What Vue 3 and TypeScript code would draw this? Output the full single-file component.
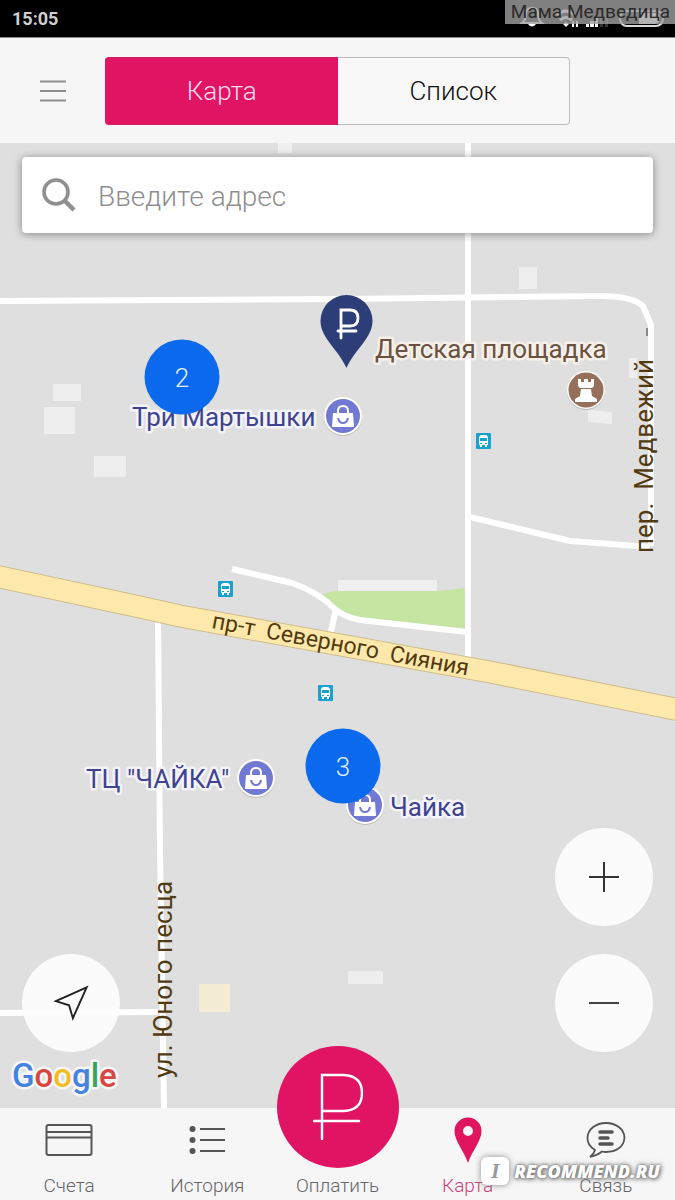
<script setup lang="ts">
import { computed, ref } from 'vue'

interface Place {
  name: string
  textX: number
  textY: number
  iconX: number
  iconY: number
}

interface Cluster {
  count: number
  x: number
  y: number
}

const MAP_WIDTH = 675
const MAP_HEIGHT = 965

const view = ref<'map' | 'list'>('map')
const address = ref('')

const shops: Place[] = [
  { name: 'Три Мартышки', textX: 132, textY: 426, iconX: 343, iconY: 416 },
  { name: 'ТЦ "ЧАЙКА"', textX: 86, textY: 788, iconX: 256, iconY: 778 },
  { name: 'Чайка', textX: 390, textY: 816, iconX: 365, iconY: 805 },
]

const avenue = ['пр-т', 'Северного', 'Сияния'].join('\u00a0\u00a0')
const lane = ['пер.', 'Медвежий'].join('\u00a0\u00a0')

const busStops = [
  { x: 484, y: 441 },
  { x: 226, y: 589 },
  { x: 326, y: 693 },
]

const clusters: Cluster[] = [
  { count: 2, x: 182, y: 234 },
  { count: 3, x: 343, y: 623 },
]

const placedClusters = computed(() =>
  clusters.map((c) => ({
    count: c.count,
    style: {
      left: `${(c.x / MAP_WIDTH) * 100}%`,
      top: `${(c.y / MAP_HEIGHT) * 100}%`,
    },
  })),
)
</script>

<template>
  <div class="screen">
    <div class="status">
      <time class="clock">15:05</time>
      <svg class="status-icons" width="150" height="30" viewBox="0 0 150 30" aria-hidden="true">
        <path d="M7 23q4-3 4-9 0-6 6-6t6 6q0 6 4 9z" fill="none" stroke="#fff" stroke-width="2" />
        <path d="M13 24h8q-4 5-8 0z" fill="#fff" />
        <path d="M42 15q9-8 18 0M45 20q6-5 12 0" fill="none" stroke="#fff" stroke-width="3" />
        <path d="M48 24l3-2 3 2-3 3z" fill="#fff" />
        <path d="M58 21v6M62 21v6" stroke="#fff" stroke-width="2" />
        <path d="M71 27v-3h3v3zM75 27v-6h4v6zM80 27V17h3v10z" fill="#fff" />
        <path d="M85 27V14h3v13zM90 27V12h3v15z" fill="#333" />
        <rect x="105" y="11" width="43" height="15" rx="7" fill="none" stroke="#ddd" stroke-width="2" />
        <path d="M124 13h16q5 0 5 5t-5 6h-16z" fill="#fff" />
      </svg>
      <span class="author">Мама Медведица</span>
    </div>

    <header class="header">
      <button class="menu" type="button" aria-label="Меню">
        <svg width="26" height="22" viewBox="0 0 26 22"><path d="M0 1.500h26M0 11h26M0 20.500h26" stroke="#8d8d8d" stroke-width="1.800" /></svg>
      </button>
      <div class="segments">
        <button type="button" :class="['segment', { active: view === 'map' }]" @click="view = 'map'">Карта</button>
        <button type="button" :class="['segment', { active: view === 'list' }]" @click="view = 'list'">Список</button>
      </div>
    </header>

    <main class="map">
      <svg class="canvas" viewBox="0 143 675 965" preserveAspectRatio="xMidYMid slice">
        <g fill="#eeeeee">
          <rect x="278" y="143" width="14" height="10" />
          <rect x="519" y="267" width="18" height="22" />
          <rect x="629" y="358" width="8" height="20" />
          <path d="M588 410l24 2v12l-24-2z" />
          <rect x="53" y="384" width="28" height="17" />
          <rect x="44" y="407" width="31" height="27" />
          <rect x="94" y="456" width="32" height="21" />
          <rect x="348" y="971" width="35" height="13" />
        </g>
        <rect x="199" y="984" width="31" height="28" fill="#f5ecd6" />
        <path d="M323 594l15-4 99 1 29-3v44l-106-14-25-8z" fill="#c6e5a2" />
        <rect x="338" y="580" width="99" height="11" fill="#efefef" />

        <g fill="none" stroke="#ffffff" stroke-width="6" stroke-linejoin="round">
          <path d="M0 301L345 299 600 296Q632 296 643 306L651 325V546" />
          <path d="M468 143V664" />
          <path d="M470 517L570 541 650 547" />
          <path d="M232 569L292 583Q318 592 335 609 344 617 360 620L467 632" />
          <path d="M336 609L331 632" />
          <path d="M158 616L160 850 164 1108" />
          <path d="M0 1013L158 1012" />
        </g>
        <g fill="none">
          <path d="M-5 576L140 607 180 616 490 672 680 710" stroke="#cdbd8c" stroke-width="23" />
          <path d="M-5 576L140 607 180 616 490 672 680 710" stroke="#ffe8ab" stroke-width="21" />
        </g>
        <path d="M647 328v8" stroke="#333" />

        <g class="street">
          <text transform="translate(211 628) rotate(10.500)">{{ avenue }}</text>
          <text class="street-large" transform="translate(653 553) rotate(-90)">{{ lane }}</text>
          <text class="street-large" transform="translate(172 1078) rotate(-90)">ул. Юного песца</text>
        </g>

        <text class="place brown" x="375" y="358">Детская площадка</text>
        <g transform="translate(586 390)">
          <circle cy="1" r="19" fill="#bbb" />
          <circle r="19" fill="#fff" />
          <circle r="17.500" fill="#96705a" />
          <path d="M-8-11h3v3h3v-3h4v3h3v-3h3v7l-2 2H-6l-2-2zM-5-1H5L6 6l5 3v3h-22V9l5-3z" fill="#fff" />
        </g>

        <g v-for="shop in shops" :key="shop.name">
          <text class="place" :x="shop.textX" :y="shop.textY">{{ shop.name }}</text>
          <g :transform="`translate(${shop.iconX} ${shop.iconY})`">
            <circle cy="1" r="19" fill="#bbb" />
            <circle r="19" fill="#fff" />
            <circle r="17" fill="#7279d2" />
            <path d="M-10-3H10L11 11H-11z" fill="#fff" />
            <path d="M-5-2V-5Q-5-10 0-10T5-5V-2" fill="none" stroke="#fff" stroke-width="2" />
            <path d="M-5 2Q-4 7 0 7T5 2" fill="none" stroke="#7279d2" stroke-width="2" />
          </g>
        </g>

        <g v-for="stop in busStops" :key="stop.y" :transform="`translate(${stop.x} ${stop.y})`">
          <rect x="-8" y="-8" width="15" height="16" rx="1" fill="#1ba1d0" />
          <path d="M-5 4V-3Q-5-6-2-6H1Q4-6 4-3V4H3V6H1V4H-2V6H-4V4z" fill="#fff" />
          <path d="M-4-3H3V0H-4zM-4 2h2v1h-2zM1 2h2v1h-2z" fill="#1ba1d0" />
        </g>

        <path d="M346.500 368C338 349 320.500 338 320.500 321A26 26 0 0 1 372.500 321C372.500 338 355 349 346.500 368z" fill="#2c3d78" />
        <path d="M341 338V310H350Q358 310 358 318T350 326H341M338 331H356" fill="none" stroke="#fff" stroke-width="2.800" stroke-linecap="round" />

        <text class="google" x="12" y="1087"><tspan fill="#4382df">G</tspan><tspan fill="#d8473f">o</tspan><tspan fill="#efbd24">o</tspan><tspan fill="#4382df">g</tspan><tspan fill="#3aa45a">l</tspan><tspan fill="#d8473f">e</tspan></text>
      </svg>

      <button v-for="c in placedClusters" :key="c.count" type="button" class="cluster" :style="c.style">{{ c.count }}</button>

      <label class="search">
        <svg width="34" height="34" viewBox="0 0 34 34" aria-hidden="true">
          <circle cx="14" cy="14" r="12" fill="none" stroke="#8f8f8f" stroke-width="3.600" />
          <path d="M22.500 22.500L32 32" stroke="#8f8f8f" stroke-width="4.500" />
        </svg>
        <input v-model="address" type="text" placeholder="Введите адрес" aria-label="Введите адрес" />
      </label>

      <button class="round locate" type="button" aria-label="Моё местоположение">
        <svg width="36" height="36" viewBox="0 0 38 38"><path d="M35.500 2.500L3 17l14 4.500L21 35z" fill="none" stroke="#222" stroke-width="2" /></svg>
      </button>
      <div class="zoom">
        <button class="round" type="button" aria-label="Приблизить">
          <svg width="30" height="30" viewBox="0 0 30 30"><path d="M0 15h30M15 0v30" stroke="#333" stroke-width="2" /></svg>
        </button>
        <button class="round" type="button" aria-label="Отдалить">
          <svg width="30" height="30" viewBox="0 0 30 30"><path d="M0 15h30" stroke="#444" stroke-width="2" /></svg>
        </button>
      </div>
    </main>

    <nav class="tabs">
      <a class="tab" href="#accounts">
        <svg width="48" height="34" viewBox="0 0 48 34" fill="none" stroke="#555" stroke-width="2"><rect x="1.500" y="2" width="45" height="30" rx="2" /><path d="M2 9h44M2 14.500h44" /></svg>
        <span>Счета</span>
      </a>
      <a class="tab" href="#history">
        <svg width="36" height="34" viewBox="0 0 36 34"><g fill="#555"><circle cx="3.500" cy="6" r="3" /><circle cx="3.500" cy="17" r="3" /><circle cx="3.500" cy="28" r="3" /></g><path d="M11 6h25M11 17h25M11 28h25" stroke="#555" stroke-width="2" /></svg>
        <span>История</span>
      </a>
      <a class="tab pay" href="#pay">
        <span class="pay-disc">
          <svg width="50" height="68" viewBox="0 0 50 68"><path d="M9 66V2H31Q49 3 49 20T31 38H9M1 48H46" fill="none" stroke="#fff" stroke-width="2.400" stroke-linecap="round" /></svg>
        </span>
        <span>Оплатить</span>
      </a>
      <a class="tab current" href="#map">
        <svg width="28" height="46" viewBox="0 0 28 46"><path fill-rule="evenodd" d="M14 46C10 34 .5 24 .5 14a13.500 13.500 0 0 1 27 0C27.500 24 18 34 14 46zM14 9a5 5 0 1 0 0 10a5 5 0 0 0 0-10z" fill="#e0145f" /></svg>
        <span>Карта</span>
      </a>
      <a class="tab" href="#contact">
        <svg width="40" height="38" viewBox="0 0 40 38" fill="none" stroke="#555"><path d="M9 29Q1 24 1.500 16.500C2 8 10 2 20 2s18 6 18.500 14.500C38 26 30 31 20 31q-2 0-4-.5Q12 34 4 36q4-3 5-7z" stroke-width="1.800" /><path d="M14 11h12M14 17h8M14 23h12" stroke-width="3.500" stroke-linecap="round" /></svg>
        <span>Связь</span>
      </a>
      <div class="watermark"><b>I</b><span>RECOMMEND.RU</span></div>
    </nav>
  </div>
</template>

<style>
body {
  margin: 0;
}
</style>

<style scoped>
.screen {
  display: flex;
  flex-direction: column;
  min-height: 100vh;
  overflow: hidden;
  background: #f6f6f6;
  font-family: Roboto, "Noto Sans", sans-serif;
  font-weight: 300;
}
button {
  border: 0;
  padding: 0;
  font: inherit;
  cursor: pointer;
}
svg {
  display: block;
}
.status {
  position: relative;
  display: flex;
  align-items: center;
  justify-content: space-between;
  height: 37px;
  padding-left: 12px;
  background: #000;
  border-bottom: 1px solid #888;
  overflow: hidden;
}
.clock {
  color: #cfcfcf;
  font-size: 18px;
  font-weight: 700;
}
.status-icons {
  align-self: flex-start;
  margin-right: 10px;
}
.author {
  position: absolute;
  top: 0;
  right: 0;
  padding: 0 5px 0 6px;
  background: rgba(160, 160, 160, 0.8);
  color: #2b2b2b;
  font-size: 19px;
  font-weight: 400;
  line-height: 24px;
}
.header {
  display: flex;
  align-items: center;
  height: 105px;
}
.menu {
  display: flex;
  justify-content: center;
  width: 105px;
  background: none;
}
.segments {
  display: flex;
  flex: 1;
  height: 68px;
  margin-right: 105px;
}
.segment {
  flex: 1;
  border: 1px solid #bcbcbc;
  border-left: 0;
  border-radius: 0 4px 4px 0;
  background: #f8f8f8;
  color: #111;
  font-size: 26px;
}
.segment:first-child {
  border-left: 1px solid #bcbcbc;
  border-right: 0;
  border-radius: 4px 0 0 4px;
}
.segment.active,
.segment.active:first-child {
  border-color: #d21a60;
  background: #e01463;
  color: #ffdcee;
}
.map {
  position: relative;
  flex: 1;
  min-height: 600px;
  background: #dfdfdf;
  overflow: hidden;
}
.canvas {
  position: absolute;
  inset: 0;
  width: 100%;
  height: 100%;
}
.place {
  fill: #3f4390;
  stroke: #f4f4f8;
  stroke-width: 5px;
  stroke-linejoin: round;
  paint-order: stroke;
  font-size: 26px;
  font-weight: 400;
}
.place.brown {
  fill: #6a5240;
  stroke: #f7f0ea;
}
.street {
  fill: #513a10;
  font-size: 23px;
  font-weight: 400;
}
.street-large {
  font-size: 26px;
}
.google {
  stroke: #f6f6f6;
  stroke-width: 5px;
  stroke-linejoin: round;
  paint-order: stroke;
  font-family: Roboto, sans-serif;
  font-size: 33px;
  font-weight: 500;
}
.cluster {
  position: absolute;
  width: 75px;
  height: 75px;
  border-radius: 50%;
  background: #0b69ee;
  color: #e0f0ff;
  font-size: 26px;
  transform: translate(-50%, -50%);
}
.search {
  position: relative;
  display: flex;
  align-items: center;
  gap: 22px;
  height: 76px;
  margin: 14px 22px 0;
  padding: 0 20px;
  box-sizing: border-box;
  border-radius: 4px;
  background: #fff;
  box-shadow: 0 1px 8px rgba(0, 0, 0, 0.4);
}
.search input {
  flex: 1;
  min-width: 0;
  border: 0;
  outline: 0;
  padding: 2px 0 0;
  background: none;
  color: #333;
  font: inherit;
  font-size: 28px;
}
.search input::placeholder {
  color: #8f8f8f;
  opacity: 1;
}
.round {
  display: flex;
  align-items: center;
  justify-content: center;
  width: 98px;
  height: 98px;
  border-radius: 50%;
  background: #fbfbfb;
}
.locate {
  position: absolute;
  left: 22px;
  bottom: 56px;
  background: rgba(253, 253, 253, 0.94);
}
.zoom {
  position: absolute;
  right: 22px;
  bottom: 56px;
  display: grid;
  gap: 28px;
}
.tabs {
  position: relative;
  display: grid;
  grid-template-columns: 1fr 1fr 122px 1fr 1fr;
  height: 92px;
  background: #f6f6f6;
}
.tab {
  display: grid;
  grid-template-rows: 64px 28px;
  justify-items: center;
  align-items: center;
  color: #666;
  font-size: 19px;
  line-height: 28px;
  text-decoration: none;
}
.current {
  color: #c9417b;
}
.pay-disc {
  display: flex;
  align-items: center;
  justify-content: center;
  align-self: end;
  width: 122px;
  height: 122px;
  margin-bottom: 4px;
  border-radius: 50%;
  background: #e01463;
}
.watermark {
  position: absolute;
  right: 15px;
  bottom: 15px;
  display: flex;
  align-items: center;
  gap: 5px;
  color: #fff;
  font-family: "Open Sans", "Noto Sans", sans-serif;
  font-size: 18px;
  font-style: italic;
  font-weight: 800;
  line-height: 28px;
  text-shadow: 0 0 3px #777, 1px 1px 4px #777, 0 0 6px #999;
  pointer-events: none;
}
.watermark b {
  width: 28px;
  border-radius: 6px;
  background: #fff;
  box-shadow: 0 0 6px #888;
  color: #999;
  font-family: "Liberation Serif", serif;
  font-size: 22px;
  font-weight: 700;
  text-align: center;
  text-shadow: none;
}
</style>
